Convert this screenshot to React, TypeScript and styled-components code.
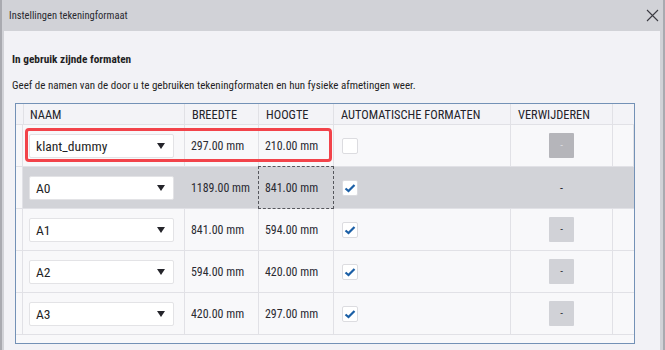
import React from 'react';
import styled, { createGlobalStyle, css } from 'styled-components';

const GlobalStyle = createGlobalStyle`
	html, body {
		margin: 0;
		padding: 0;
		background: #d1d2d7;
	}
	body {
		font-family: 'Roboto Condensed', 'Liberation Sans Narrow', 'DejaVu Sans Condensed', sans-serif;
		color: #1f1f24;
	}
`;

interface IFormat {
	name: string;
	width: string;
	height: string;
	auto: boolean;
	deletable: boolean;
}

const formats: IFormat[] = [
	{ name: 'klant_dummy', width: '297.00 mm', height: '210.00 mm', auto: false, deletable: false },
	{ name: 'A0', width: '1189.00 mm', height: '841.00 mm', auto: true, deletable: true },
	{ name: 'A1', width: '841.00 mm', height: '594.00 mm', auto: true, deletable: true },
	{ name: 'A2', width: '594.00 mm', height: '420.00 mm', auto: true, deletable: true },
	{ name: 'A3', width: '420.00 mm', height: '297.00 mm', auto: true, deletable: true },
];

const COLUMNS = '7px 162px 74px 75px 177px 102px 21px';

const Frame = styled.div`
	width: 665px;
	height: 350px;
	box-sizing: border-box;
	display: flex;
	flex-direction: column;
	background: #d1d2d7;
	border-left: 2px solid #a9aab0;
	border-right: 2px solid #a9aab0;
	overflow: hidden;
`;

const TitleBar = styled.div`
	height: 31px;
	flex: none;
	display: flex;
	align-items: center;
	justify-content: space-between;
	padding: 0 4px 0 7px;
	font-size: 10.5px;
	color: #2a2a30;
`;

const CloseButton = styled.div`
	width: 14px;
	height: 14px;
	display: flex;
	align-items: center;
	justify-content: center;
`;

const Body = styled.div`
	flex: 1;
	margin: 0 3px 0 2px;
	background: #f2f2f6;
	padding: 20px 0 0 8px;
	display: flex;
	flex-direction: column;
`;

const Heading = styled.div`
	font-size: 11.3px;
	font-weight: 700;
	line-height: 18px;
`;

const Description = styled.div`
	font-size: 11px;
	line-height: 18px;
	margin-top: 8px;
`;

const Table = styled.div`
	margin: 8px 0 0 3px;
	width: 620px;
	box-sizing: border-box;
	border: 1px solid #7391b6;
	background: #f8f8fa;
	padding-bottom: 8px;
`;

const Row = styled.div<{ $header?: boolean }>`
	position: relative;
	display: grid;
	grid-template-columns: ${COLUMNS};
	height: ${(p) => (p.$header ? 21 : 42)}px;
	box-sizing: border-box;
	border-bottom: 1px solid #e1e1e6;
	background: ${(p) => (p.$header ? '#f3f3f7' : '#f8f8fa')};
`;

const Cell = styled.div<{ $selected?: boolean; $focus?: boolean; $center?: boolean }>`
	position: relative;
	display: flex;
	align-items: center;
	justify-content: ${(p) => (p.$center ? 'center' : 'flex-start')};
	box-sizing: border-box;
	padding-left: ${(p) => (p.$center ? 0 : 6)}px;
	border-right: 1px solid #e1e1e6;
	font-size: 11.9px;
	color: #2a2a32;
	white-space: nowrap;
	&:last-child {
		border-right: none;
	}
	${(p) =>
		p.$selected &&
		css`
			background: #d2d3d8;
			border-right-color: #d2d3d8;
		`}
	${(p) =>
		p.$focus &&
		css`
			&::after {
				content: '';
				position: absolute;
				inset: -1px;
				border: 1px dashed #55565c;
			}
		`}
`;

const HeaderCell = styled(Cell)`
	font-size: 12.4px;
	color: #23232a;
	padding-left: 7px;
`;

const Select = styled.div`
	width: 145px;
	height: 24px;
	box-sizing: border-box;
	background: #ffffff;
	border: 1px solid #e3e3e6;
	border-radius: 2px;
	display: flex;
	align-items: center;
	justify-content: space-between;
	padding: 0 7px 0 6px;
	font-size: 13.6px;
	color: #1f1f26;
`;

const Arrow = styled.div`
	width: 0;
	height: 0;
	border-left: 4.5px solid transparent;
	border-right: 4.5px solid transparent;
	border-top: 6px solid #25252b;
	margin-right: 1px;
`;

const Checkbox = styled.div`
	width: 16px;
	height: 16px;
	box-sizing: border-box;
	background: #ffffff;
	border: 1px solid #dcdce0;
	border-radius: 2px;
	margin-left: 2px;
	display: flex;
	align-items: center;
	justify-content: center;
`;

const DeleteButton = styled.div<{ $disabled?: boolean }>`
	width: 25px;
	height: 25px;
	border-radius: 1px;
	background: ${(p) => (p.$disabled ? '#b5b5ba' : '#d1d2d7')};
	color: ${(p) => (p.$disabled ? '#dcdce0' : '#2a2a30')};
	display: flex;
	align-items: center;
	justify-content: center;
	font-size: 11px;
	line-height: 1;
`;

const Highlight = styled.div`
	position: absolute;
	left: 9px;
	top: 3px;
	width: 307px;
	height: 34px;
	box-sizing: border-box;
	border: 3px solid #f2434a;
	border-radius: 4px;
	pointer-events: none;
`;

const CheckMark = () => (
	<svg width="12" height="10" viewBox="0 0 12 10">
		<polyline points="1.5,5.5 4.5,8 10.5,2" fill="none" stroke="#1b5fa6" strokeWidth="2.2" />
	</svg>
);

const CloseIcon = () => (
	<svg width="13" height="13" viewBox="0 0 13 13">
		<path d="M1 1 L12 12 M12 1 L1 12" stroke="#3b3b42" strokeWidth="1.1" />
	</svg>
);

export default function App() {
	return (
		<>
			<GlobalStyle />
			<Frame>
				<TitleBar>
					<span>Instellingen tekeningformaat</span>
					<CloseButton>
						<CloseIcon />
					</CloseButton>
				</TitleBar>
				<Body>
					<Heading>In gebruik zijnde formaten</Heading>
					<Description>Geef de namen van de door u te gebruiken tekeningformaten en hun fysieke afmetingen weer.</Description>
					<Table>
						<Row $header>
							<HeaderCell />
							<HeaderCell>NAAM</HeaderCell>
							<HeaderCell>BREEDTE</HeaderCell>
							<HeaderCell>HOOGTE</HeaderCell>
							<HeaderCell>AUTOMATISCHE FORMATEN</HeaderCell>
							<HeaderCell>VERWIJDEREN</HeaderCell>
							<HeaderCell />
						</Row>
						{formats.map((f, i) => {
							const selected = i === 1;
							return (
								<Row key={f.name}>
									<Cell />
									<Cell $selected={selected}>
										<Select>
											<span>{f.name}</span>
											<Arrow />
										</Select>
									</Cell>
									<Cell $selected={selected}>{f.width}</Cell>
									<Cell $selected={selected} $focus={selected}>
										{f.height}
									</Cell>
									<Cell $selected={selected}>
										<Checkbox>{f.auto && <CheckMark />}</Checkbox>
									</Cell>
									<Cell $selected={selected} $center>
										{selected ? '-' : <DeleteButton $disabled={!f.deletable}>-</DeleteButton>}
									</Cell>
									<Cell $selected={selected} />
									{i === 0 && <Highlight />}
								</Row>
							);
						})}
					</Table>
				</Body>
			</Frame>
		</>
	);
}
